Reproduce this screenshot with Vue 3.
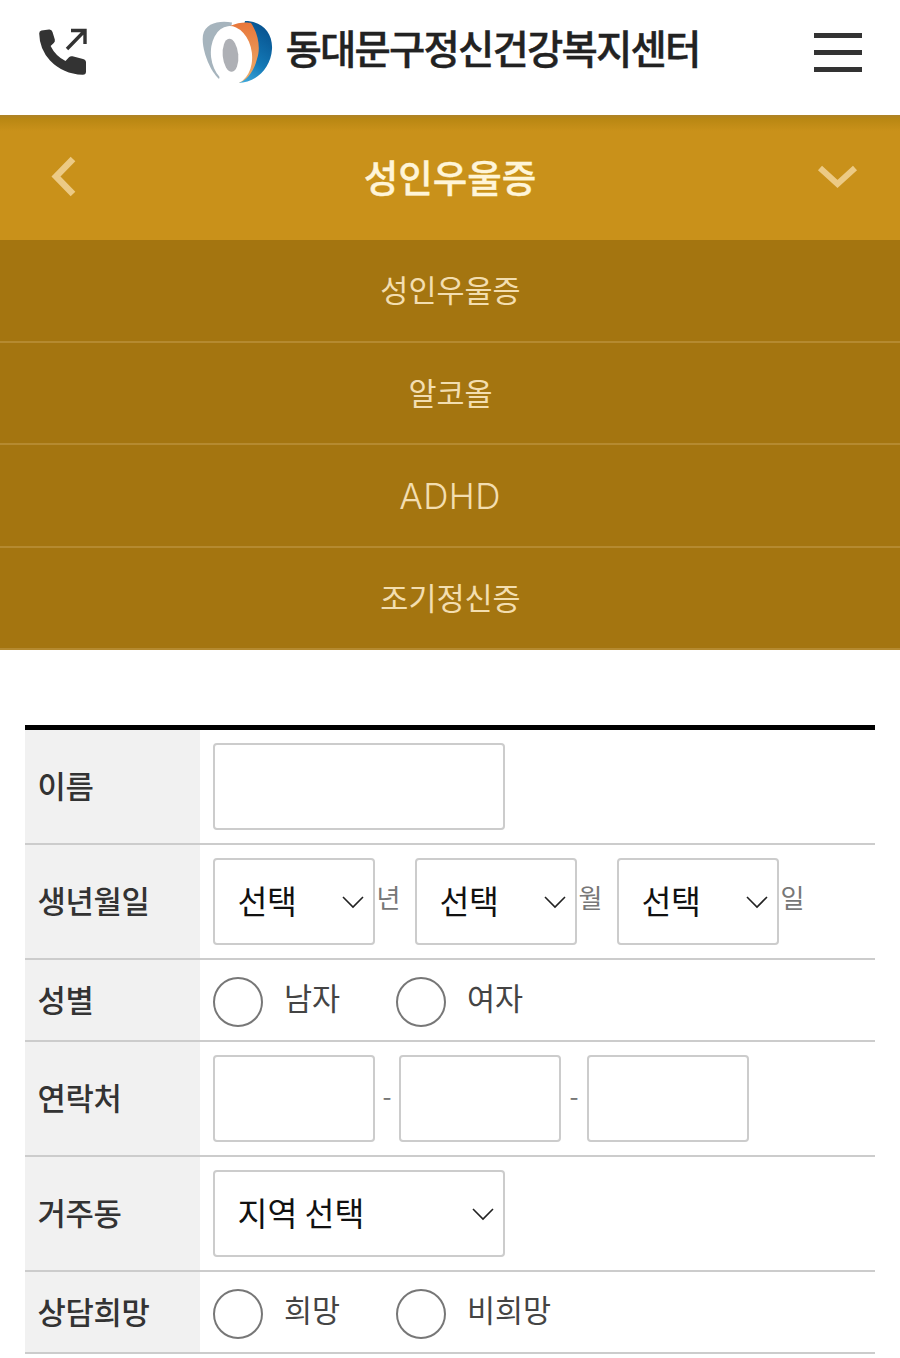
<script setup>
const menu = [
  { text: '성인우울증' },
  { text: '알코올' },
  { text: 'ADHD', latin: true },
  { text: '조기정신증' }
]
</script>

<template>
  <div class="page">
    <header class="top">
      <svg class="phone" width="50" height="50" viewBox="0 0 50 50">
        <path d="M2.5 4.500 L10 3.500 Q12.800 3.200 13.500 6 L15.800 13.500 Q16.300 15.500 14.800 17 L11.600 20 Q16.500 30 26.500 35 L30 31.300 Q31.500 29.800 33.500 30.300 L44 33 Q47 33.800 47 36.500 L47 45.500 Q47 49 43.500 48.800 Q24 48 11 34.500 Q0.500 23 0.200 7.500 Q0.200 5 2.500 4.500 Z" fill="#333"/>
        <path d="M28 23 L45 5.500 M32 4.500 L46 4.500 L46 18" fill="none" stroke="#333" stroke-width="3.400"/>
      </svg>
      <div class="brand">
        <svg class="logo" width="72" height="64" viewBox="0 0 72 64">
          <defs>
            <linearGradient id="blue" x1="0.8" y1="0" x2="0.3" y2="1">
              <stop offset="0" stop-color="#064f8c"/>
              <stop offset="0.6" stop-color="#1378b5"/>
              <stop offset="1" stop-color="#3fa9dc"/>
            </linearGradient>
            <linearGradient id="orange" x1="0" y1="0" x2="0" y2="1">
              <stop offset="0" stop-color="#e8763a"/>
              <stop offset="1" stop-color="#eeb06c"/>
            </linearGradient>
          </defs>
          <path d="M30 1.500 C18 -1 3 2 1 14 C-1 28 8 50 17 58 L25 30 Z" fill="#a6b4bd"/>
          <path d="M43 0 C60 0 71 12 70 28 C69 47 54 62 36 62 L30 50 Z" fill="url(#blue)"/>
          <path d="M28 5 C36 1 45 1 49 2 C56 12 59 27 55 38 C52 50 45 60 36 62 L28 50 Z" fill="url(#orange)"/>
          <ellipse cx="29.500" cy="34" rx="20.500" ry="29" transform="rotate(-7 29.500 34)" fill="#fff"/>
          <ellipse cx="28.500" cy="34.300" rx="7.800" ry="16.500" transform="rotate(-5 28.500 34.300)" fill="#aeb0b5"/>
        </svg>
        <span class="brand-name">동대문구정신건강복지센터</span>
      </div>
      <div class="burger"><i></i><i></i><i></i></div>
    </header>

    <nav class="gold">
      <svg width="30" height="44" viewBox="0 0 30 44" class="back"><path d="M23 4 L6 21.500 L23 39" fill="none" stroke="#ecca85" stroke-width="6.500"/></svg>
      <strong>성인우울증</strong>
      <svg width="42" height="28" viewBox="0 0 42 28" class="down"><path d="M3 3 L20.500 19 L38 3" fill="none" stroke="#ecca85" stroke-width="6"/></svg>
    </nav>
    <ul class="sub">
      <li v-for="item in menu" :key="item.text" :class="{ latin: item.latin }">{{ item.text }}</li>
    </ul>

    <section class="table">
      <div class="row tall">
        <div class="th">이름</div>
        <div class="td"><input class="field w292" /></div>
      </div>
      <div class="row tall">
        <div class="th">생년월일</div>
        <div class="td birth">
          <div class="select w162">선택<svg viewBox="0 0 22 14" class="chev"><path d="M1 2 L11 12 L21 2" fill="none" stroke="#222" stroke-width="1.600"/></svg></div>
          <span class="unit">년</span>
          <div class="select w162">선택<svg viewBox="0 0 22 14" class="chev"><path d="M1 2 L11 12 L21 2" fill="none" stroke="#222" stroke-width="1.600"/></svg></div>
          <span class="unit">월</span>
          <div class="select w162">선택<svg viewBox="0 0 22 14" class="chev"><path d="M1 2 L11 12 L21 2" fill="none" stroke="#222" stroke-width="1.600"/></svg></div>
          <span class="unit">일</span>
        </div>
      </div>
      <div class="row short">
        <div class="th">성별</div>
        <div class="td radios">
          <label class="radio"><i></i><span>남자</span></label>
          <label class="radio"><i></i><span>여자</span></label>
        </div>
      </div>
      <div class="row tall">
        <div class="th">연락처</div>
        <div class="td tel">
          <input class="field w162" />
          <span class="dash">-</span>
          <input class="field w162" />
          <span class="dash">-</span>
          <input class="field w162" />
        </div>
      </div>
      <div class="row tall">
        <div class="th">거주동</div>
        <div class="td">
          <div class="select w292 wide">지역 선택<svg viewBox="0 0 22 14" class="chev"><path d="M1 2 L11 12 L21 2" fill="none" stroke="#222" stroke-width="1.600"/></svg></div>
        </div>
      </div>
      <div class="row short">
        <div class="th">상담희망</div>
        <div class="td radios">
          <label class="radio"><i></i><span>희망</span></label>
          <label class="radio"><i></i><span>비희망</span></label>
        </div>
      </div>
    </section>
  </div>
</template>

<style>
html, body { margin: 0; background: #fff; }
</style>

<style scoped>
.page {
  width: 900px;
  height: 1358px;
  overflow: hidden;
  font-family: "Noto Sans CJK KR", "Noto Sans", sans-serif;
  color: #333;
}
.top {
  height: 115px;
  display: flex;
  align-items: center;
  padding: 0 38px;
  box-sizing: border-box;
}
.phone { margin: -13px 0 0 0.500px; flex: none; }
.brand {
  display: flex;
  align-items: center;
  margin-left: 113px;
  margin-top: -12px;
}
.logo { flex: none; margin: 1.500px 0 -1.500px; }
.brand-name {
  margin-left: 12px;
  margin-top: -9px;
  font-size: 39.500px;
  font-weight: 500;
  -webkit-text-stroke: 0.4px #222;
  letter-spacing: -1.850px;
  color: #222;
  white-space: nowrap;
  line-height: 48px;
}
.burger {
  margin-left: auto;
  width: 48px;
  display: flex;
  flex-direction: column;
  gap: 12px;
  margin-top: -11px;
}
.burger i { display: block; height: 5px; background: #333; }
.gold {
  height: 125px;
  background: linear-gradient(#ad8228 0, #b98713 4px, #c9911a 16px);
  display: flex;
  align-items: center;
  justify-content: center;
  position: relative;
}
.gold strong {
  font-size: 37.500px;
  font-weight: 500;
  -webkit-text-stroke: 0.4px #fff5d8;
  color: #fff5d8;
  margin-top: -4px;
}
.back { position: absolute; left: 49.500px; top: 40px; }
.down { position: absolute; left: 817px; top: 50px; }
.sub {
  list-style: none;
  margin: 0;
  padding: 0;
  background: #a47510;
}
.sub li {
  height: 100.500px;
  line-height: 98px;
  text-align: center;
  font-size: 30.500px;
  color: #f3deb0;
  border-bottom: 2px solid #b58a30;
  padding-left: 1px;
}
.sub li.latin {
  font-family: Inter, "Noto Sans", sans-serif;
  font-size: 35px;
  letter-spacing: 0.400px;
  line-height: 102px;
  font-weight: 300;
  padding-left: 0;
}
.table {
  margin: 75px 25px 0;
  border-top: 5px solid #000;
}
.row {
  display: flex;
  border-bottom: 2px solid #ccc;
  box-sizing: border-box;
}
.tall { height: 115px; }
.short { height: 82px; }
.th {
  width: 175px;
  flex: none;
  background: #f1f1f1;
  box-sizing: border-box;
  padding: 0 0 4px 12.500px;
  display: flex;
  align-items: center;
  font-size: 30.800px;
  color: #333;
  font-weight: 500;
  letter-spacing: -0.300px;
}
.td {
  flex: 1;
  display: flex;
  align-items: center;
  padding-left: 13px;
}
.field, .select {
  box-sizing: border-box;
  height: 87px;
  border: 2px solid #ccc;
  border-radius: 4px;
  background: #fff;
  margin: 0;
  padding: 0;
  flex: none;
}
.w292 { width: 292px; }
.w162 { width: 162px; }
.select {
  position: relative;
  display: flex;
  align-items: center;
  padding: 0 0 5px 22.500px;
  font-size: 32.500px;
  color: #111;
  letter-spacing: -0.500px;
}
.select.wide { letter-spacing: 0; }
.chev {
  position: absolute;
  right: 9px;
  top: 35px;
  width: 22px;
  height: 14px;
}
.unit {
  width: 40px;
  flex: none;
  padding-left: 1.500px;
  box-sizing: border-box;
  font-size: 26px;
  color: #777;
  margin-top: -10px;
}
.tel .dash {
  flex: none;
  text-align: center;
  color: #777;
  font-size: 26px;
  margin-top: -8px;
}
.tel .dash:nth-child(2) { width: 24px; }
.tel .dash:nth-child(4) { width: 26px; }
.radio {
  display: flex;
  align-items: center;
  width: 183px;
  flex: none;
  margin-top: 4px;
}
.radio i {
  display: block;
  box-sizing: border-box;
  width: 50px;
  height: 50px;
  border: 2px solid #777;
  border-radius: 50%;
  background: #fff;
  flex: none;
}
.radio span {
  margin-left: 21px;
  margin-top: -10px;
  font-size: 30.500px;
  color: #444;
}
</style>
